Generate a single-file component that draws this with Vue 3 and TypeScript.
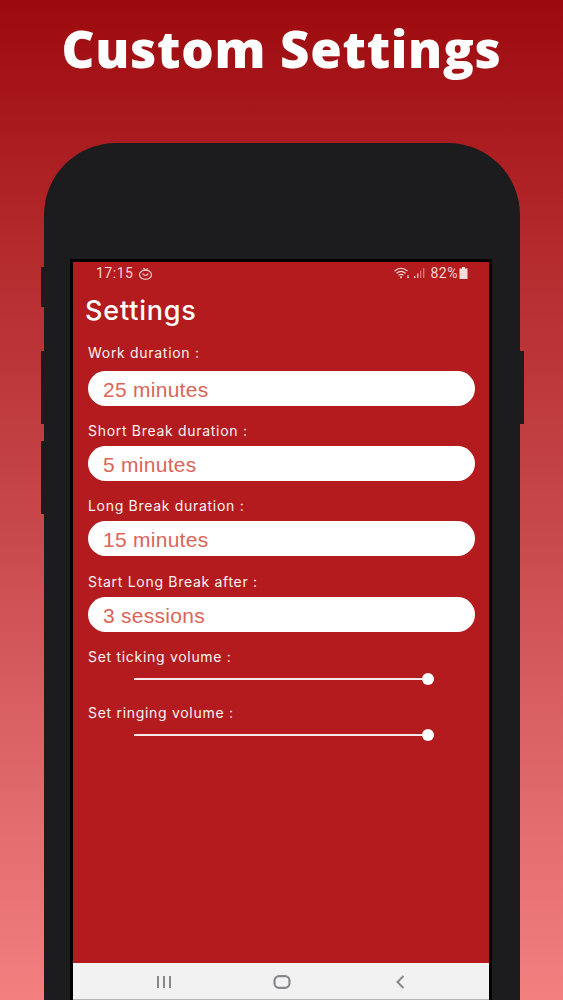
<script setup lang="ts">
const fields = [
  { label: 'Work duration :', value: '25 minutes', cls: 'first' },
  { label: 'Short Break duration :', value: '5 minutes', cls: '' },
  { label: 'Long Break duration :', value: '15 minutes', cls: '' },
  { label: 'Start Long Break after :', value: '3 sessions', cls: '' },
]
const sliders = ['Set ticking volume :', 'Set ringing volume :']
</script>

<template>
  <div class="page">
    <h1 class="title">Custom Settings</h1>
    <div class="phone">
      <span class="btn left b1"></span>
      <span class="btn left b2"></span>
      <span class="btn left b3"></span>
      <span class="btn right b2"></span>
      <div class="bezel">
        <div class="screen">
          <div class="status">
            <div class="status-side">
              <span>17:15</span>
              <svg width="15" height="13" viewBox="0 0 14 13" fill="none" stroke="#f6d5d3" stroke-width="1.1">
                <ellipse cx="7" cy="7.7" rx="6" ry="4.600" />
                <path d="M7 3.100C6.600 2 5.800 1.400 4.600 1.300M7 3.100C7.800 2 8.600 1.700 9.600 1.800" />
                <path d="M4.200 6.600c1.600 2.400 4 2.400 5.600 0" />
              </svg>
            </div>
            <div class="status-side">
              <svg width="18" height="12" viewBox="0 0 17 12" fill="none" stroke="#f6dcda" stroke-width="1.1">
                <path d="M1 4C5 .6 10 .6 14 4M3 6.200c2.800-2.300 6.200-2.300 9 0M5 8.300c1.600-1.200 3.400-1.200 5 0" />
                <circle cx="7.500" cy="10.300" r="1" fill="#f6dcda" stroke="none" />
                <path d="M14.500 8v3M13.500 10l1 1 1-1" stroke-width=".9" />
              </svg>
              <svg class="signal" width="13" height="12" viewBox="0 0 13 12">
                <rect x="1" y="9" width="1.400" height="2" fill="#f6dcda" />
                <rect x="4" y="6.500" width="1.400" height="4.500" fill="#f0b3b0" />
                <rect x="7" y="3.500" width="1.400" height="7.500" fill="#d9716f" />
                <rect x="10" y="1" width="1.400" height="10" fill="#d9716f" />
              </svg>
              <span>82%</span>
              <svg class="battery" width="9" height="12" viewBox="0 0 9 12">
                <path d="M3 0h3v1.400h2.500V12H.5V1.400H3z" fill="#f6dcda" />
              </svg>
            </div>
          </div>
          <h2 class="heading">Settings</h2>
          <div class="form">
            <div v-for="f in fields" :key="f.label" class="group" :class="f.cls">
              <div class="label">{{ f.label }}</div>
              <div class="field">{{ f.value }}</div>
            </div>
            <div v-for="s in sliders" :key="s" class="slider-group">
              <div class="label">{{ s }}</div>
              <div class="slider">
                <span class="thumb"></span>
              </div>
            </div>
          </div>
          <div class="nav">
            <svg width="18" height="14" viewBox="0 0 18 14" fill="none" stroke="#88888c" stroke-width="2">
              <path d="M3 1v12M9 1v12M15 1v12" />
            </svg>
            <svg width="18" height="14" viewBox="0 0 18 14" fill="none" stroke="#88888c" stroke-width="2.200">
              <rect x="1.500" y="1.200" width="15" height="11.600" rx="4.500" />
            </svg>
            <svg width="18" height="14" viewBox="0 0 18 14" fill="none" stroke="#88888c" stroke-width="2">
              <path d="M12.500 1 6.500 7l6 6" />
            </svg>
          </div>
        </div>
      </div>
    </div>
  </div>
</template>

<style>
html, body { margin: 0; padding: 0; }
</style>

<style scoped>
.page {
  width: 563px;
  height: 1000px;
  overflow: hidden;
  background: linear-gradient(180deg, #9d0a0e 0%, #b42a2d 25%, #c54548 50%, #dc6467 75%, #f37f7f 100%);
  font-family: "Inter", "Liberation Sans", sans-serif;
}
.title {
  margin: 0;
  height: 143px;
  padding-top: 16px;
  box-sizing: border-box;
  text-align: center;
  color: #fff;
  font-family: "Open Sans", "Liberation Sans", sans-serif;
  font-size: 51px;
  line-height: 64px;
  font-weight: 800;
  letter-spacing: .7px;
}
.phone {
  position: relative;
  margin-left: 44px;
  width: 476px;
  height: 857px;
  box-sizing: border-box;
  padding: 116px 28px 0 26px;
  background: #1c1c1e;
  border-radius: 72px 72px 0 0;
}
.btn {
  position: absolute;
  width: 4px;
  background: #1c1c1e;
}
.btn.left { left: -3px; }
.btn.right { right: -4px; }
.b1 { top: 124px; height: 40px; }
.b2 { top: 208px; height: 73px; }
.b3 { top: 298px; height: 73px; }
.bezel {
  height: 741px;
  box-sizing: border-box;
  border: solid #000;
  border-width: 3px 3px 0 3px;
}
.screen {
  height: 100%;
  display: flex;
  flex-direction: column;
  background: #b31b1e;
  color: #fff;
}
.status {
  height: 22px;
  flex: none;
  display: flex;
  justify-content: space-between;
  align-items: center;
  padding: 0 21px 0 23px;
  font-family: "Roboto", "Liberation Sans", sans-serif;
  font-size: 14px;
  letter-spacing: .5px;
  color: #f6d5d3;
}
.status-side {
  display: flex;
  align-items: center;
  gap: 5px;
}
.status-side .signal { margin-left: -3px; }
.status-side .battery { margin-left: -4px; }
.heading {
  margin: 0;
  padding: 10px 0 0 12px;
  height: 42px;
  box-sizing: border-box;
  font-size: 27px;
  line-height: 33px;
  font-weight: 500;
  letter-spacing: .8px;
}
.form {
  flex: 1;
  padding: 18px 14px 0 15px;
  display: flex;
  flex-direction: column;
}
.label {
  height: 17px;
  font-size: 14px;
  line-height: 17px;
  letter-spacing: .7px;
  color: #fdf3f2;
}
.group { margin-bottom: 16.300px; }
.group.first .label { margin-bottom: 10px; }
.group:not(.first) .label { margin-bottom: 7px; }
.group.first { margin-bottom: 16px; }
.field {
  height: 35px;
  box-sizing: border-box;
  padding-left: 15px;
  border-radius: 18px;
  background: #fff;
  color: #dc6458;
  font-family: "Liberation Sans", sans-serif;
  font-size: 21px;
  line-height: 37px;
  letter-spacing: .27px;
}
.slider-group { height: 56px; }
.slider {
  position: relative;
  width: 294px;
  height: 2px;
  margin: 13.500px 0 0 46px;
  background: #fbe9e8;
}
.thumb {
  position: absolute;
  right: -6px;
  top: -5px;
  width: 12px;
  height: 12px;
  border-radius: 50%;
  background: #fff;
}
.nav {
  height: 37px;
  flex: none;
  box-sizing: border-box;
  display: flex;
  justify-content: center;
  align-items: center;
  gap: 100px;
  padding: 2px 0 0 2px;
  background: #f2f2f3;
  border-bottom: 1px solid #b5b5b7;
}
</style>
